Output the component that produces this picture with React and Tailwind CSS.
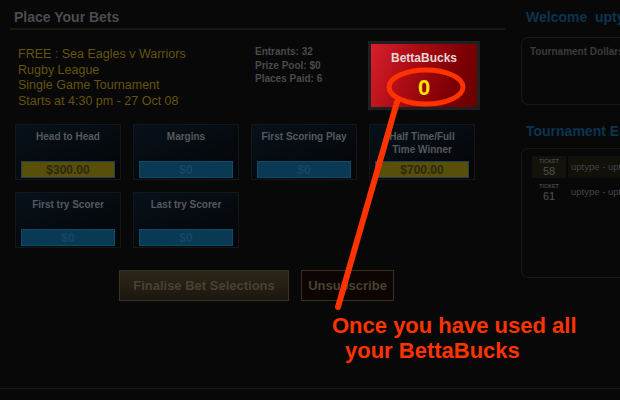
import React from "react";

const bets = [
  [
    { title: "Head to Head", value: "$300.00", gold: true },
    { title: "Margins", value: "$0" },
    { title: "First Scoring Play", value: "$0" },
    { title: "Half Time/Full Time Winner", value: "$700.00", gold: true },
  ],
  [
    { title: "First try Scorer", value: "$0" },
    { title: "Last try Scorer", value: "$0" },
  ],
];

const BetCard = ({ title, value, gold }) => (
  <div className="flex h-[56px] w-[106px] flex-col justify-between border border-[#141618] bg-[linear-gradient(160deg,#07111a_0%,#05080c_70%,#040506_100%)] px-[5px] pb-[1px] pt-[5px]">
    <div className="px-[4px] text-center text-[10px] font-bold leading-[13px] text-[#56595c]">{title}</div>
    <div
      className={
        gold
          ? "flex h-[17px] items-center justify-center border border-[#24404c] bg-[#58500a] text-[12px] font-bold text-[#2c280d]"
          : "flex h-[17px] items-center justify-center border border-[#0e4a6c] bg-[#0a3954] text-[12px] font-bold text-[#164666]"
      }
    >
      {value}
    </div>
  </div>
);

const TicketRow = ({ num, shaded }) => (
  <div className="flex h-[22px] gap-[2px]">
    <div className={`flex w-[34px] shrink-0 flex-col items-center justify-center ${shaded ? "bg-[#13130b]" : ""}`}>
      <span className="text-[5.5px] font-bold leading-[7px] text-[#454545]">TICKET</span>
      <span className="text-[11px] leading-[12px] text-[#505050]">{num}</span>
    </div>
    <div className={`flex flex-1 items-center whitespace-nowrap pl-[3px] text-[9.5px] text-[#444] ${shaded ? "bg-[#11110a]" : ""}`}>
      uptype - uptype
    </div>
  </div>
);

export default function App() {
  return (
    <div className="relative flex h-[400px] w-[620px] overflow-hidden bg-[#080808] font-['Liberation_Sans',Arial,sans-serif]">
      <div className="w-[505px] shrink-0 pl-[10px] pt-[9px]">
        <div className="h-[21px] border-b-2 border-[#161a10] pl-[4px] text-[14px] font-bold leading-[16px] text-[#4a4c4e]">
          Place Your Bets
        </div>

        <div className="mt-[17px] flex">
          <div className="w-[245px] pl-[8px] text-[12.5px] leading-[15.5px] text-[#64540c]">
            <div>FREE : Sea Eagles v Warriors</div>
            <div>Rugby League</div>
            <div>Single Game Tournament</div>
            <div>Starts at 4:30 pm - 27 Oct 08</div>
          </div>
          <div className="-mt-[2px] w-[113px] text-[10px] font-bold leading-[13.5px] text-[#4a4a4a]">
            <div>Entrants: 32</div>
            <div>Prize Pool: $0</div>
            <div>Places Paid: 6</div>
          </div>
          <div className="-mt-[6px] h-[69px] w-[112px] border-[3px] border-[#202020] bg-[#141414]">
            <div className="flex h-full flex-col items-center bg-[linear-gradient(110deg,#d8202c_0%,#a80a12_40%,#7c0004_75%,#6a0000_100%)] pt-[7px]">
              <span className="text-[12px] font-bold leading-[14px] text-[#e6d6d6]">BettaBucks</span>
              <span className="mt-[12px] text-[22px] font-bold leading-[22px] text-[#ffe400]">0</span>
            </div>
          </div>
        </div>

        <div className="ml-[5px] mt-[14px] flex flex-col gap-[12px]">
          {bets.map((row, i) => (
            <div key={i} className="flex gap-[12px]">
              {row.map((b) => (
                <BetCard key={b.title} {...b} />
              ))}
            </div>
          ))}
        </div>

        <div className="ml-[109px] mt-[22px] flex gap-[12px]">
          <button className="h-[31px] w-[170px] border border-[#3a3222] bg-[linear-gradient(180deg,#2c2619_0%,#1c170e_100%)] text-[13px] font-bold text-[#4a4130]">
            Finalise Bet Selections
          </button>
          <button className="h-[31px] w-[93px] border border-[#3a3020] bg-[#0d0503] text-[13px] font-bold text-[#4a4130]">
            Unsubscribe
          </button>
        </div>
      </div>

      <div className="min-w-0 flex-1 overflow-hidden pl-[16px] pt-[9px]">
        <div className="whitespace-nowrap pl-[5px] text-[14px] font-bold leading-[16px] text-[#0b3450]">Welcome&nbsp; uptype</div>
        <div className="mt-[12px] h-[68px] rounded-l-[7px] border border-r-0 border-[#19190f] pl-[8px] pt-[6px]">
          <div className="whitespace-nowrap text-[10px] font-bold text-[#3b3b3b]">Tournament Dollars</div>
        </div>
        <div className="mt-[18px] whitespace-nowrap pl-[5px] text-[14px] font-bold leading-[16px] text-[#0b3450]">Tournament Entries</div>
        <div className="mt-[9px] flex h-[130px] flex-col gap-[3px] rounded-l-[7px] border border-r-0 border-[#19190f] pl-[10px] pt-[7px]">
          <TicketRow num="58" shaded />
          <TicketRow num="61" />
        </div>
      </div>

      <div className="absolute bottom-[11px] left-0 h-px w-full bg-[#1a1a1a]" />

      <svg className="pointer-events-none absolute left-0 top-0" width="620" height="400">
        <ellipse cx="426" cy="87" rx="37" ry="17" fill="none" stroke="#ff3300" strokeWidth="5" />
        <line x1="397" y1="102" x2="338" y2="307" stroke="#ff3300" strokeWidth="6" strokeLinecap="round" />
      </svg>

      <div className="absolute left-[332px] top-[313px] text-[22px] font-bold leading-[25px] text-[#ff3300]">
        <div>Once you have used all</div>
        <div className="pl-[13px]">your BettaBucks</div>
      </div>
    </div>
  );
}
